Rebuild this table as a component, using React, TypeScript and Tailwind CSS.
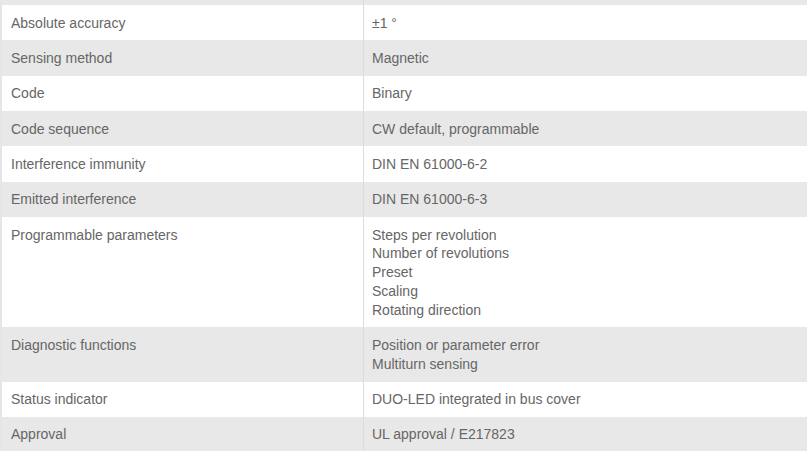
const rows: { label: string; value: string[] }[] = [
  { label: 'Absolute accuracy', value: ['±1 °'] },
  { label: 'Sensing method', value: ['Magnetic'] },
  { label: 'Code', value: ['Binary'] },
  { label: 'Code sequence', value: ['CW default, programmable'] },
  { label: 'Interference immunity', value: ['DIN EN 61000-6-2'] },
  { label: 'Emitted interference', value: ['DIN EN 61000-6-3'] },
  {
    label: 'Programmable parameters',
    value: ['Steps per revolution', 'Number of revolutions', 'Preset', 'Scaling', 'Rotating direction'],
  },
  { label: 'Diagnostic functions', value: ['Position or parameter error', 'Multiturn sensing'] },
  { label: 'Status indicator', value: ['DUO-LED integrated in bus cover'] },
  { label: 'Approval', value: ['UL approval / E217823'] },
];

export default function App() {
  return (
    <div
      className="w-[807px] h-[451px] overflow-hidden bg-white text-[14px] leading-[18.75px] text-[#666]"
      style={{ fontFamily: '"Liberation Sans", Arial, sans-serif' }}
    >
      <div className="border-l-2 border-[#e6e6e6]">
        <div className="grid grid-cols-[361px_1fr] h-[5px] bg-[#e8e8e8]">
          <div />
          <div className="border-l border-[#dcdcdc]" />
        </div>
        {rows.map((row, i) => (
          <div
            key={row.label}
            className={`grid grid-cols-[361px_1fr] ${i % 2 === 1 ? 'bg-[#e8e8e8]' : 'bg-white'}`}
          >
            <div className="pt-[8.6px] pb-[8px] pl-[9px]">{row.label}</div>
            <div className="pt-[8.6px] pb-[8px] pl-2 border-l border-[#dcdcdc]">
              {row.value.map(v => (
                <div key={v}>{v}</div>
              ))}
            </div>
          </div>
        ))}
      </div>
    </div>
  );
}
